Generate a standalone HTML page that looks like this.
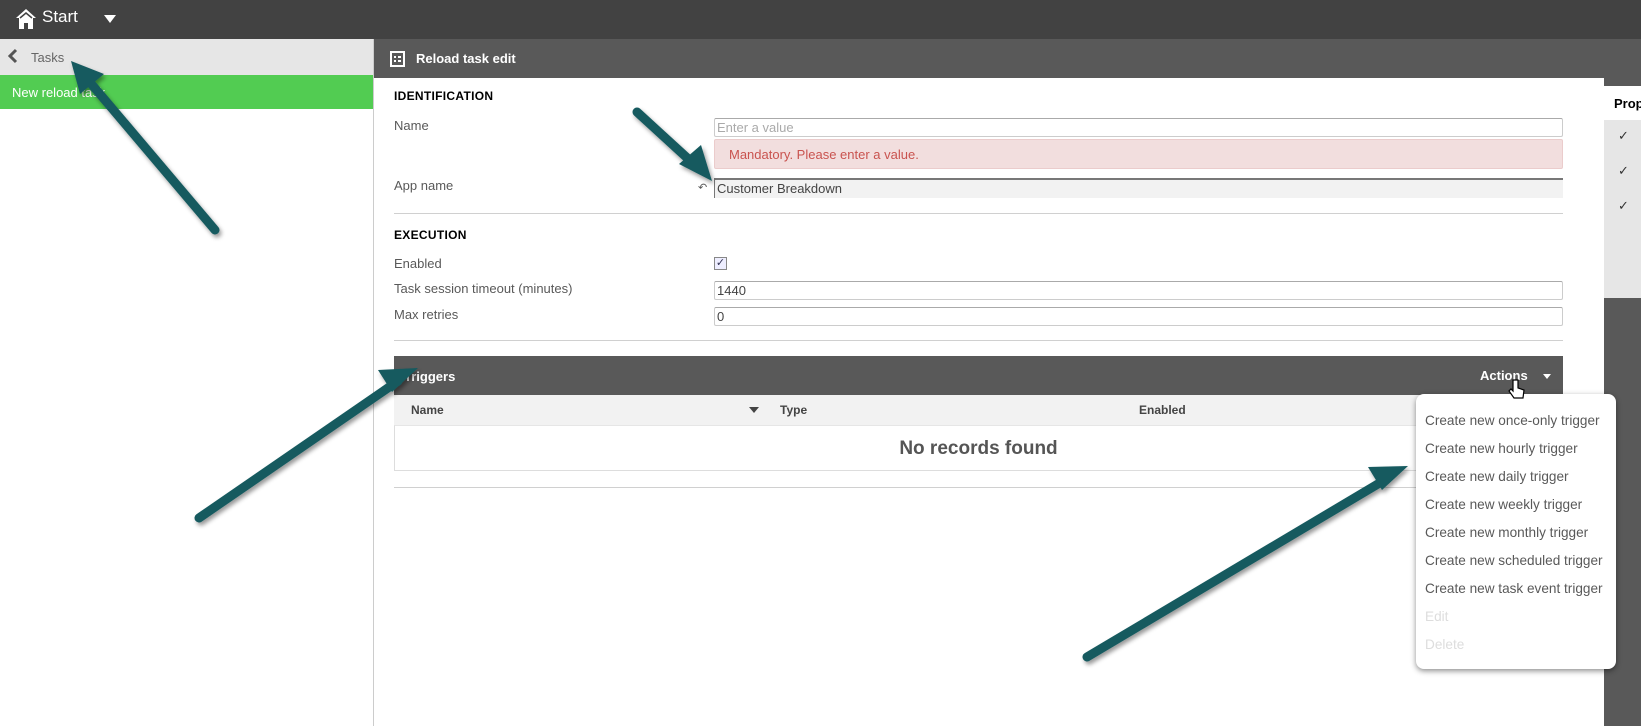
<!DOCTYPE html>
<html><head><meta charset="utf-8"><style>
*{margin:0;padding:0;box-sizing:border-box}
body{width:1641px;height:726px;overflow:hidden;background:#595959;font-family:"Liberation Sans",sans-serif;position:relative;color:#595959}
.a{position:absolute}
.lbl{position:absolute;left:394px;font-size:13px;color:#595959}
.inp{position:absolute;left:714px;width:849px;height:19px;border:1px solid #ccc;border-top-color:#aaa;border-radius:2px;background:#fff;font-size:13px;color:#444;padding-left:2px;line-height:17px}
.sep{position:absolute;left:394px;width:1169px;height:1px;background:#d0d0d0}
.h{position:absolute;left:394px;font-size:12px;font-weight:bold;color:#000;letter-spacing:.3px}
.mi{position:absolute;left:1425px;font-size:13.6px;color:#595959}
</style></head><body>
<div class="a" style="left:0;top:0;width:1641px;height:39px;background:#424242"></div>
<svg class="a" style="left:15px;top:8px" width="22" height="22" viewBox="0 0 22 22"><path d="M11 1L1 10h3v11h5v-6h4v6h5V10h3z" fill="#fff"/><path d="M5 10l6-5 6 5" fill="none" stroke="#424242" stroke-width="1.5"/></svg>
<div class="a" style="left:42px;top:7px;font-size:17px;color:#fff">Start</div>
<div class="a" style="left:104px;top:15px;border-left:6px solid transparent;border-right:6px solid transparent;border-top:8px solid #fff"></div>
<div class="a" style="left:0;top:39px;width:374px;height:687px;background:#fff;border-right:1px solid #ccc"></div>
<div class="a" style="left:0;top:39px;width:373px;height:36px;background:#e6e6e6"></div>
<svg class="a" style="left:7px;top:48px" width="12" height="16"><path d="M9 2L3 8l6 6" fill="none" stroke="#555" stroke-width="3"/></svg>
<div class="a" style="left:31px;top:50px;font-size:13px;color:#666">Tasks</div>
<div class="a" style="left:0;top:75px;width:373px;height:34px;background:#52cc52"></div>
<div class="a" style="left:12px;top:85px;font-size:13px;color:#fff">New reload task</div>
<div class="a" style="left:374px;top:39px;width:1267px;height:39px;background:#595959"></div>
<svg class="a" style="left:390px;top:50px" width="15" height="17"><rect x="1" y="2" width="13" height="14" fill="none" stroke="#fff" stroke-width="2"/><rect x="4" y="6" width="2" height="2" fill="#fff"/><rect x="8" y="6" width="3" height="2" fill="#fff"/><rect x="4" y="10" width="2" height="2" fill="#fff"/><rect x="8" y="10" width="3" height="2" fill="#fff"/></svg>
<div class="a" style="left:416px;top:51px;font-size:13px;font-weight:bold;color:#fff">Reload task edit</div>
<div class="a" style="left:374px;top:78px;width:1230px;height:648px;background:#fff"></div>
<div class="a" style="left:1604px;top:86px;width:37px;height:34px;background:#fff"></div>
<div class="a" style="left:1614px;top:96px;font-size:13px;font-weight:bold;color:#000">Prop</div>
<div class="a" style="left:1604px;top:120px;width:37px;height:178px;background:#e6e6e6"></div>
<div class="a" style="left:1618px;top:128px;font-size:13px;color:#333">✓</div>
<div class="a" style="left:1618px;top:163px;font-size:13px;color:#333">✓</div>
<div class="a" style="left:1618px;top:198px;font-size:13px;color:#333">✓</div>

<div class="h" style="top:89px">IDENTIFICATION</div>
<div class="lbl" style="top:118px">Name</div>
<div class="inp" style="top:118px;color:#aaa">Enter a value</div>
<div class="a" style="left:714px;top:139px;width:849px;height:30px;background:#f2dede;border:1px solid #ebcccc;border-radius:2px;color:#c9534f;font-size:13px;padding:7px 0 0 14px">Mandatory. Please enter a value.</div>
<div class="lbl" style="top:178px">App name</div>
<div class="a" style="left:698px;top:181px;font-size:11px;color:#555">↶</div>
<div class="a" style="left:714px;top:178px;width:849px;height:20px;background:#f2f2f2;border-top:2px solid #777;border-left:1px solid #777;font-size:13px;color:#444;padding:1px 0 0 2px">Customer Breakdown</div>
<div class="sep" style="top:213px"></div>
<div class="h" style="top:228px">EXECUTION</div>
<div class="lbl" style="top:256px">Enabled</div>
<div class="a" style="left:714px;top:257px;width:13px;height:13px;border:1px solid #888;background:#eef;font-size:11px;color:#335;line-height:11px;text-align:center">✓</div>
<div class="lbl" style="top:281px">Task session timeout (minutes)</div>
<div class="inp" style="top:281px">1440</div>
<div class="lbl" style="top:307px">Max retries</div>
<div class="inp" style="top:307px">0</div>
<div class="sep" style="top:340px"></div>

<div class="a" style="left:394px;top:356px;width:1169px;height:39px;background:#595959"></div>
<div class="a" style="left:404px;top:369px;font-size:13px;font-weight:bold;color:#fff">Triggers</div>
<div class="a" style="left:1480px;top:368px;font-size:13px;font-weight:bold;color:#fff">Actions</div>
<div class="a" style="left:1543px;top:374px;border-left:4px solid transparent;border-right:4px solid transparent;border-top:5px solid #fff"></div>
<div class="a" style="left:394px;top:395px;width:1169px;height:30px;background:#f2f2f2"></div>
<div class="a" style="left:411px;top:403px;font-size:12px;font-weight:bold;color:#444">Name</div>
<div class="a" style="left:749px;top:407px;border-left:5px solid transparent;border-right:5px solid transparent;border-top:6px solid #444"></div>
<div class="a" style="left:780px;top:403px;font-size:12px;font-weight:bold;color:#444">Type</div>
<div class="a" style="left:1139px;top:403px;font-size:12px;font-weight:bold;color:#444">Enabled</div>
<div class="a" style="left:394px;top:425px;width:1169px;height:46px;border:1px solid #ddd;border-top-color:#e6e6e6;text-align:center;font-size:19px;font-weight:bold;color:#555;padding-top:12px">No records found</div>
<div class="sep" style="top:487px"></div>

<div class="a" style="left:1416px;top:394px;width:200px;height:275px;background:#fff;border-radius:8px;box-shadow:0 2px 6px rgba(0,0,0,.45)"></div>
<div class="mi" style="top:413px">Create new once-only trigger</div>
<div class="mi" style="top:441px">Create new hourly trigger</div>
<div class="mi" style="top:469px">Create new daily trigger</div>
<div class="mi" style="top:497px">Create new weekly trigger</div>
<div class="mi" style="top:525px">Create new monthly trigger</div>
<div class="mi" style="top:553px">Create new scheduled trigger</div>
<div class="mi" style="top:581px">Create new task event trigger</div>
<div class="mi" style="top:609px;color:#ddd">Edit</div>
<div class="mi" style="top:637px;color:#ddd">Delete</div>

<svg class="a" style="left:0;top:0" width="1641" height="726">
<defs><filter id="s"><feDropShadow dx="2" dy="3" stdDeviation="2" flood-opacity=".4"/></filter></defs>
<g fill="#145a5f" stroke="#145a5f" stroke-width="9" stroke-linecap="round" filter="url(#s)">
<line x1="215" y1="230" x2="88" y2="80"/><polygon stroke="none" points="71,61 104,74 80,94"/>
<line x1="637" y1="112" x2="696" y2="166"/><polygon stroke="none" points="712,181 679,164 701,145"/>
<line x1="199" y1="518" x2="398" y2="381"/><polygon stroke="none" points="418,368 392,392 378,370"/>
<line x1="1087" y1="657" x2="1388" y2="478"/><polygon stroke="none" points="1408,466 1382,490 1368,467"/>
</g></svg>
<svg class="a" style="left:1508px;top:378px" width="18" height="22"><path d="M5 2v11l-2-2-2 2 5 7h9l1-8-6-2V2z" fill="#fff" stroke="#000" stroke-width="1.2"/></svg>
</body></html>
